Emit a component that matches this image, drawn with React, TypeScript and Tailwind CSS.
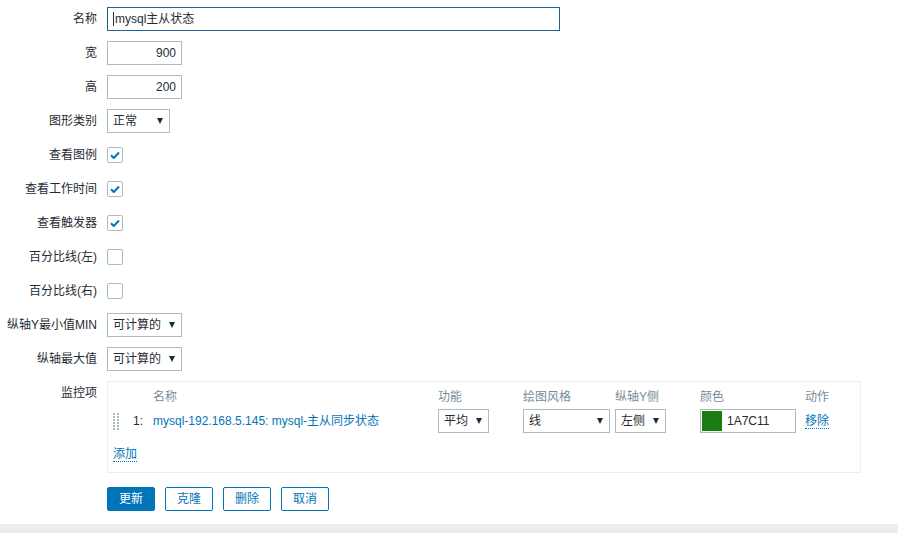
import React from "react";

const font = { fontFamily: '"Liberation Sans", Arial, "Noto Sans CJK SC", sans-serif' };

function Arrow() {
  return (
    <span className="ml-auto mr-[6px] block h-0 w-0 border-x-[3.5px] border-t-[6px] border-x-transparent border-t-[#1f2c33]" />
  );
}

function Select({ text, width }: { text: string; width: string }) {
  return (
    <div className={`flex h-6 items-center border border-[#acbbc2] bg-white pl-[5px] text-[12px] text-[#1f2c33] ${width}`}>
      <span>{text}</span>
      <Arrow />
    </div>
  );
}

function Check({ checked }: { checked: boolean }) {
  return (
    <div className="flex h-4 w-4 items-center justify-center rounded-[2px] border border-[#acbbc2] bg-white">
      {checked && (
        <svg width="10" height="8" viewBox="0 0 10 8">
          <path d="M1 4.2 L3.8 7 L9 1.5" fill="none" stroke="#0275b8" strokeWidth="2" />
        </svg>
      )}
    </div>
  );
}

function Row({ label, children, top }: { label: string; children: React.ReactNode; top?: boolean }) {
  return (
    <div className={`flex ${top ? "items-start" : "items-center"} min-h-6`}>
      <div className="w-[97px] shrink-0 text-right leading-6 text-[#1f2c33]">{label}</div>
      <div className="ml-[10px] flex items-center">{children}</div>
    </div>
  );
}

function Handle() {
  const dots = [];
  for (let r = 0; r < 6; r++) {
    for (let c = 0; c < 2; c++) {
      dots.push(<rect key={`${r}-${c}`} x={c * 4} y={r * 3} width="2" height="2" fill="#acbbc2" />);
    }
  }
  return (
    <svg width="6" height="17" viewBox="0 0 6 17">
      {dots}
    </svg>
  );
}

export default function App() {
  return (
    <div className="flex min-h-[533px] w-[898px] flex-col bg-white text-[12px]" style={font}>
      <div className="flex flex-col gap-[10px] pt-[7px]">
        <Row label="名称">
          <div className="relative flex h-6 w-[453px] items-center border border-[#1f6398] bg-white pl-[5px] text-[#1f2c33]">
            <span className="mr-[1px] inline-block h-[14px] w-px bg-[#1f2c33]" />
            <span>mysql主从状态</span>
          </div>
        </Row>
        <Row label="宽">
          <div className="flex h-6 w-[75px] items-center justify-end border border-[#acbbc2] pr-[5px] text-[#1f2c33]">900</div>
        </Row>
        <Row label="高">
          <div className="flex h-6 w-[75px] items-center justify-end border border-[#acbbc2] pr-[5px] text-[#1f2c33]">200</div>
        </Row>
        <Row label="图形类别">
          <Select text="正常" width="w-[63px]" />
        </Row>
        <Row label="查看图例">
          <Check checked />
        </Row>
        <Row label="查看工作时间">
          <Check checked />
        </Row>
        <Row label="查看触发器">
          <Check checked />
        </Row>
        <Row label="百分比线(左)">
          <Check checked={false} />
        </Row>
        <Row label="百分比线(右)">
          <Check checked={false} />
        </Row>
        <Row label="纵轴Y最小值MIN">
          <Select text="可计算的" width="w-[75px]" />
        </Row>
        <Row label="纵轴最大值">
          <Select text="可计算的" width="w-[75px]" />
        </Row>
        <Row label="监控项" top>
          <div className="w-[754px] border border-[#ebeef0] pb-[6px] pt-[3px]">
            <div className="flex h-6 items-center text-[#768d99]">
              <div className="w-[45px] shrink-0" />
              <div className="w-[285px] shrink-0">名称</div>
              <div className="w-[85px] shrink-0">功能</div>
              <div className="w-[92px] shrink-0">绘图风格</div>
              <div className="w-[85px] shrink-0">纵轴Y侧</div>
              <div className="w-[105px] shrink-0">颜色</div>
              <div className="shrink-0">动作</div>
            </div>
            <div className="flex h-6 items-center text-[#1f2c33]">
              <div className="flex w-[25px] shrink-0 pl-[5px]">
                <Handle />
              </div>
              <div className="w-[20px] shrink-0">1:</div>
              <div className="w-[285px] shrink-0 text-[#0275b8]">mysql-192.168.5.145: mysql-主从同步状态</div>
              <div className="w-[85px] shrink-0">
                <Select text="平均" width="w-[51px]" />
              </div>
              <div className="w-[92px] shrink-0">
                <Select text="线" width="w-[87px]" />
              </div>
              <div className="w-[85px] shrink-0">
                <Select text="左侧" width="w-[51px]" />
              </div>
              <div className="w-[105px] shrink-0">
                <div className="flex h-6 w-[96px] items-center border border-[#acbbc2] pl-[1px]">
                  <div className="h-5 w-5 bg-[#1a7c11]" />
                  <span className="ml-[5px] text-[#1f2c33]">1A7C11</span>
                </div>
              </div>
              <div className="shrink-0">
                <span className="border-b border-dotted border-[#0275b8] leading-[14px] text-[#0275b8]">移除</span>
              </div>
            </div>
            <div className="mt-[9px] flex h-6 items-center pl-[5px]">
              <span className="border-b border-dotted border-[#0275b8] leading-[14px] text-[#0275b8]">添加</span>
            </div>
          </div>
        </Row>
      </div>
      <div className="ml-[107px] mt-[14px] flex gap-[10px]">
        <button className="h-6 w-[48px] rounded-[2px] border border-[#0275b8] bg-[#0275b8] text-white">更新</button>
        <button className="h-6 w-[48px] rounded-[2px] border border-[#0275b8] bg-white text-[#0275b8]">克隆</button>
        <button className="h-6 w-[48px] rounded-[2px] border border-[#0275b8] bg-white text-[#0275b8]">删除</button>
        <button className="h-6 w-[48px] rounded-[2px] border border-[#0275b8] bg-white text-[#0275b8]">取消</button>
      </div>
      <div className="mt-[13px] flex-1 bg-[#ebeef0]" />
    </div>
  );
}
